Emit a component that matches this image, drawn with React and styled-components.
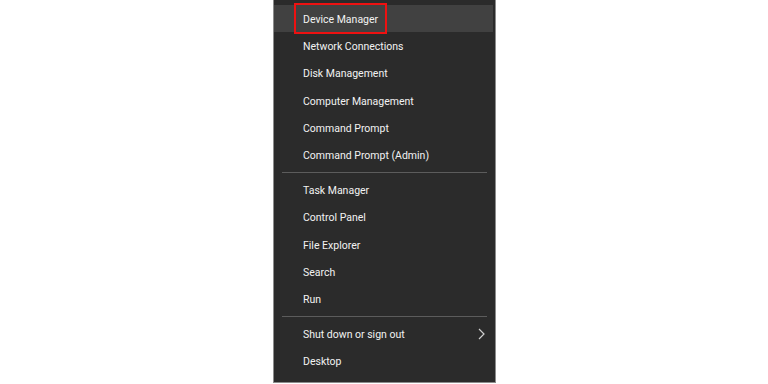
import React from 'react';
import styled, { createGlobalStyle } from 'styled-components';

const GlobalStyle = createGlobalStyle`
  html, body {
    margin: 0;
    padding: 0;
    background: #ffffff;
  }
`;

const Page = styled.div`
  width: 768px;
  height: 384px;
  display: flex;
  justify-content: center;
  overflow: hidden;
  padding-left: 1px;
  box-sizing: border-box;
`;

const Menu = styled.div`
  width: 223px;
  height: 383px;
  box-sizing: border-box;
  background: #2b2b2b;
  border: 1px solid #8c8c8c;
  border-top: none;
  padding: 5px 2px 0 0;
  display: flex;
  flex-direction: column;
  font-family: "Segoe UI", Roboto, "Noto Sans", sans-serif;
  font-size: 10.5px;
  color: #f2f2f2;
`;

const Item = styled.div`
  position: relative;
  height: 27.3px;
  box-sizing: border-box;
  flex: none;
  display: flex;
  align-items: center;
  justify-content: space-between;
  padding: 1px 8px 0 29px;
  background: ${(p) => (p.$active ? '#414141' : 'transparent')};
`;

const Label = styled.span`
  white-space: nowrap;
`;

const Separator = styled.div`
  flex: none;
  height: 1px;
  margin: 3.3px 6px 3.2px 8px;
  background: #5c5c5c;
`;

const Highlight = styled.div`
  position: absolute;
  left: 20px;
  top: -2px;
  width: 93px;
  height: 31px;
  box-sizing: border-box;
  border: 2px solid #ee1111;
`;

function Chevron() {
  return (
    <svg width="7" height="12" viewBox="0 0 7 12">
      <polyline points="1,1 6,6 1,11" fill="none" stroke="#cfcfcf" strokeWidth="1.2" />
    </svg>
  );
}

const groups = [
  [
    'Device Manager',
    'Network Connections',
    'Disk Management',
    'Computer Management',
    'Command Prompt',
    'Command Prompt (Admin)',
  ],
  ['Task Manager', 'Control Panel', 'File Explorer', 'Search', 'Run'],
  ['Shut down or sign out', 'Desktop'],
];

export default function App() {
  return (
    <>
      <GlobalStyle />
      <Page>
        <Menu>
          {groups.map((group, gi) => (
            <React.Fragment key={gi}>
              {gi > 0 && <Separator />}
              {group.map((label) => (
                <Item key={label} $active={label === 'Device Manager'}>
                  <Label>{label}</Label>
                  {label === 'Shut down or sign out' && <Chevron />}
                  {label === 'Device Manager' && <Highlight />}
                </Item>
              ))}
            </React.Fragment>
          ))}
        </Menu>
      </Page>
    </>
  );
}
